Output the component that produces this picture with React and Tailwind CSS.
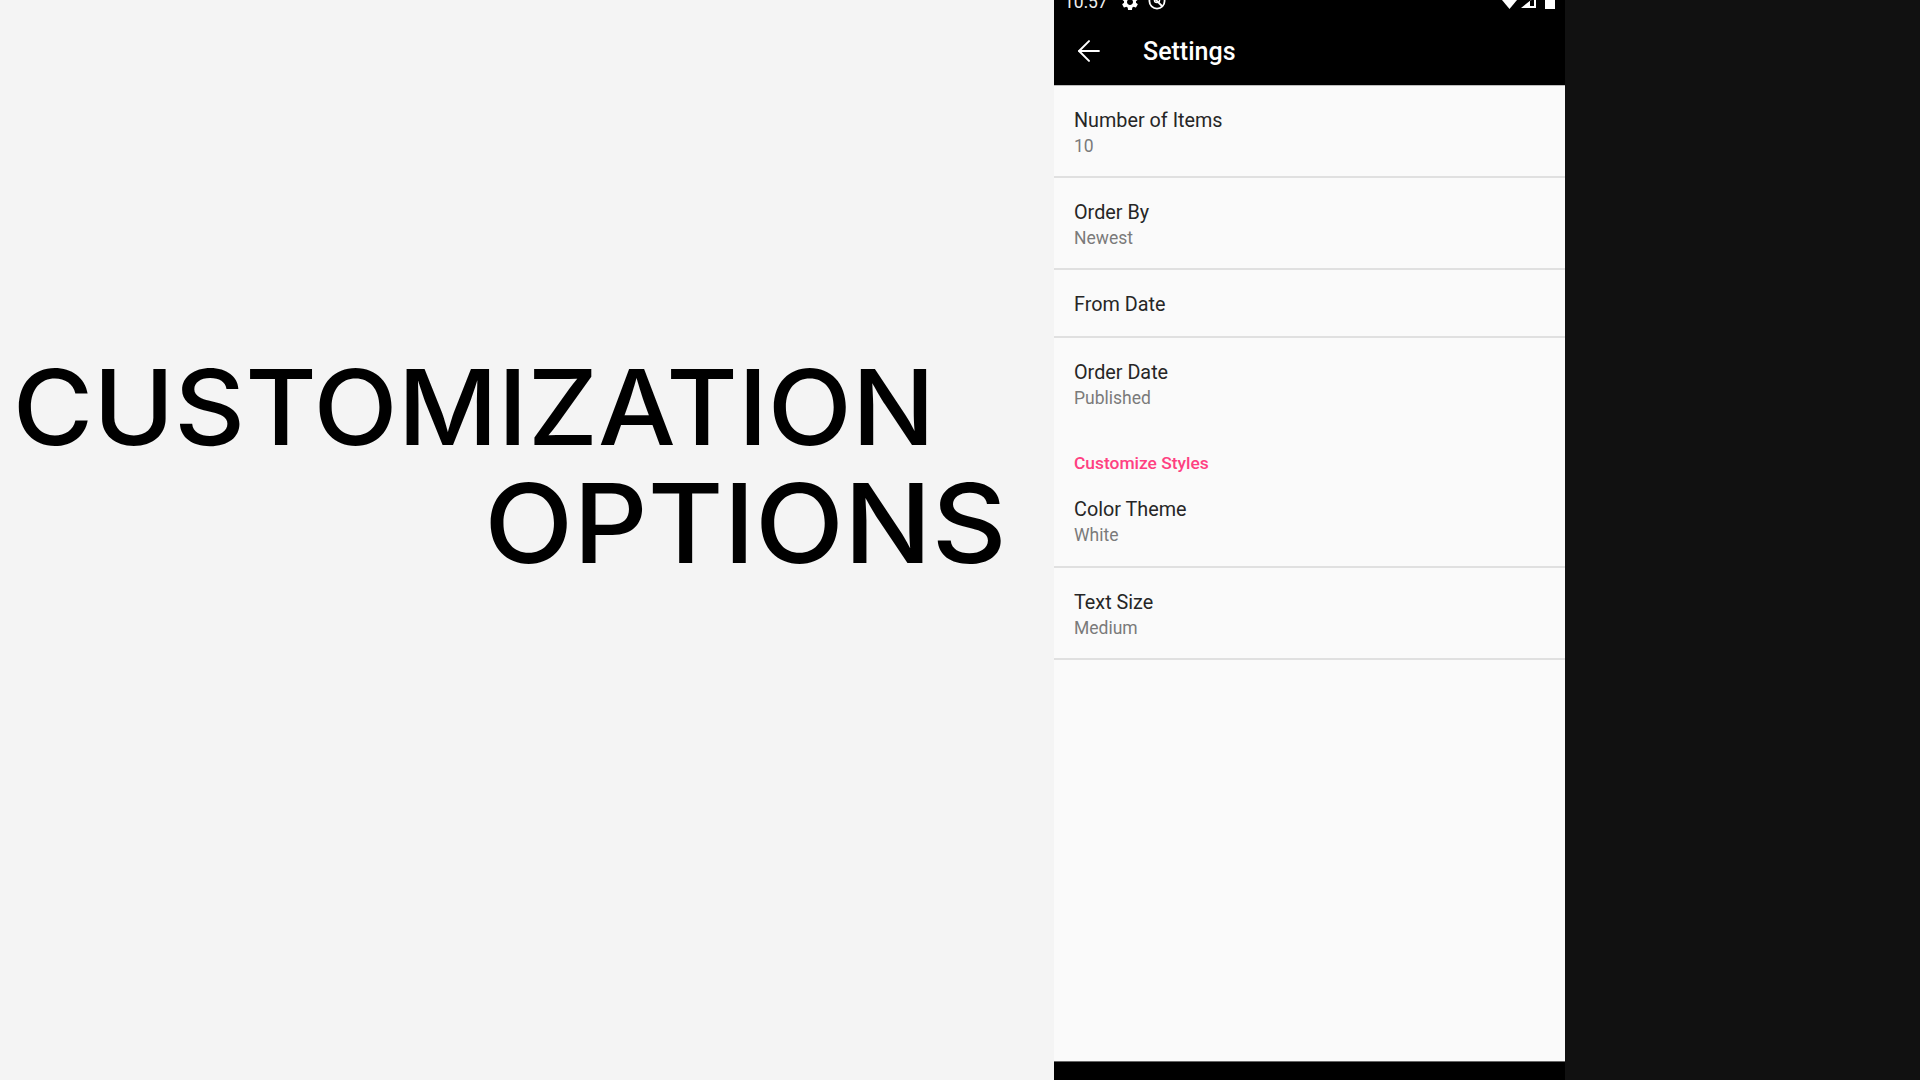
import { ArrowLeft } from "lucide-react";
import { MdSettings } from "react-icons/md";

function Row({ title, value, className }) {
  return (
    <div className={className}>
      <div className="text-[19.8px] leading-[26px] text-[#262626]">{title}</div>
      {value && <div className="text-[17.5px] leading-[25px] text-[#7a7a7a]">{value}</div>}
    </div>
  );
}

function StatusBar() {
  return (
    <div className="flex h-[24px] items-start overflow-hidden pl-[10px] pr-[10px]">
      <span className="-mt-[8px] text-[17.5px] leading-[20px] text-[#eeeeee]">10:57</span>
      <MdSettings className="-mt-[8px] ml-[12px] text-white" size={20} />
      <svg className="-mt-[8px] ml-[8px]" width="18" height="18" viewBox="0 0 18 18" fill="none" stroke="white" strokeWidth="1.8">
        <circle cx="9" cy="9" r="7.6" />
        <path d="M4 4l10 10" />
        <circle cx="9" cy="8" r="2.6" strokeWidth="1.4" />
      </svg>
      <div className="flex-1" />
      <svg className="-mt-[4px]" width="15" height="14" viewBox="0 0 15 14" fill="white">
        <path d="M0 4h15L7.5 13z" />
      </svg>
      <svg className="-mt-[4px] ml-[4px]" width="15" height="14" viewBox="0 0 15 14" fill="white" fillRule="evenodd">
        <path d="M0 12L15 0v12zM9 5v5h4V2.5z" />
      </svg>
      <div className="ml-[9px] h-[9px] w-[10px] bg-white" />
    </div>
  );
}

export default function App() {
  return (
    <div className="flex h-[1080px] w-[1920px] overflow-hidden font-['Roboto',sans-serif]">
      <div className="w-[1054px] bg-[#f4f4f4] pt-[349px] font-['Inter',sans-serif] font-medium text-black">
        <div className="origin-left scale-x-[1.055] whitespace-nowrap pl-[12px] text-[104px] leading-[116px]">CUSTOMIZATION</div>
        <div className="origin-left scale-x-[1.055] whitespace-nowrap pl-[459px] text-[110px] leading-[116px]">OPTIONS</div>
      </div>

      <div className="flex w-[511px] flex-col bg-[#fafafa]">
        <div className="h-[86px] border-b border-[#bdbdbd] bg-black">
          <StatusBar />
          <div className="flex h-[54px] items-center pl-[18px]">
            <ArrowLeft className="text-white" size={34} strokeWidth={1.4} />
            <span className="ml-[37px] mt-[2px] text-[25px] font-medium text-white">Settings</span>
          </div>
        </div>

        <div className="flex-1">
          <Row title="Number of Items" value="10" className="h-[92px] border-b-2 border-[#e0e0e0] px-[20px] pt-[22px]" />
          <Row title="Order By" value="Newest" className="h-[92px] border-b-2 border-[#e0e0e0] px-[20px] pt-[22px]" />
          <Row title="From Date" className="flex h-[68px] items-center border-b-2 border-[#e0e0e0] px-[20px] pt-[3px]" />
          <Row title="Order Date" value="Published" className="h-[76px] px-[20px] pt-[22px]" />
          <div className="h-[60px] px-[20px] pt-[37px] text-[17.4px] font-medium leading-[24px] text-[#ff4081]">Customize Styles</div>
          <Row title="Color Theme" value="White" className="h-[94px] border-b-2 border-[#e0e0e0] px-[20px] pt-[23px]" />
          <Row title="Text Size" value="Medium" className="h-[92px] border-b-2 border-[#e0e0e0] px-[20px] pt-[22px]" />
        </div>

        <div className="h-[19px] border-t border-[#666] bg-black" />
      </div>

      <div className="flex-1 bg-[#111111]" />
    </div>
  );
}
